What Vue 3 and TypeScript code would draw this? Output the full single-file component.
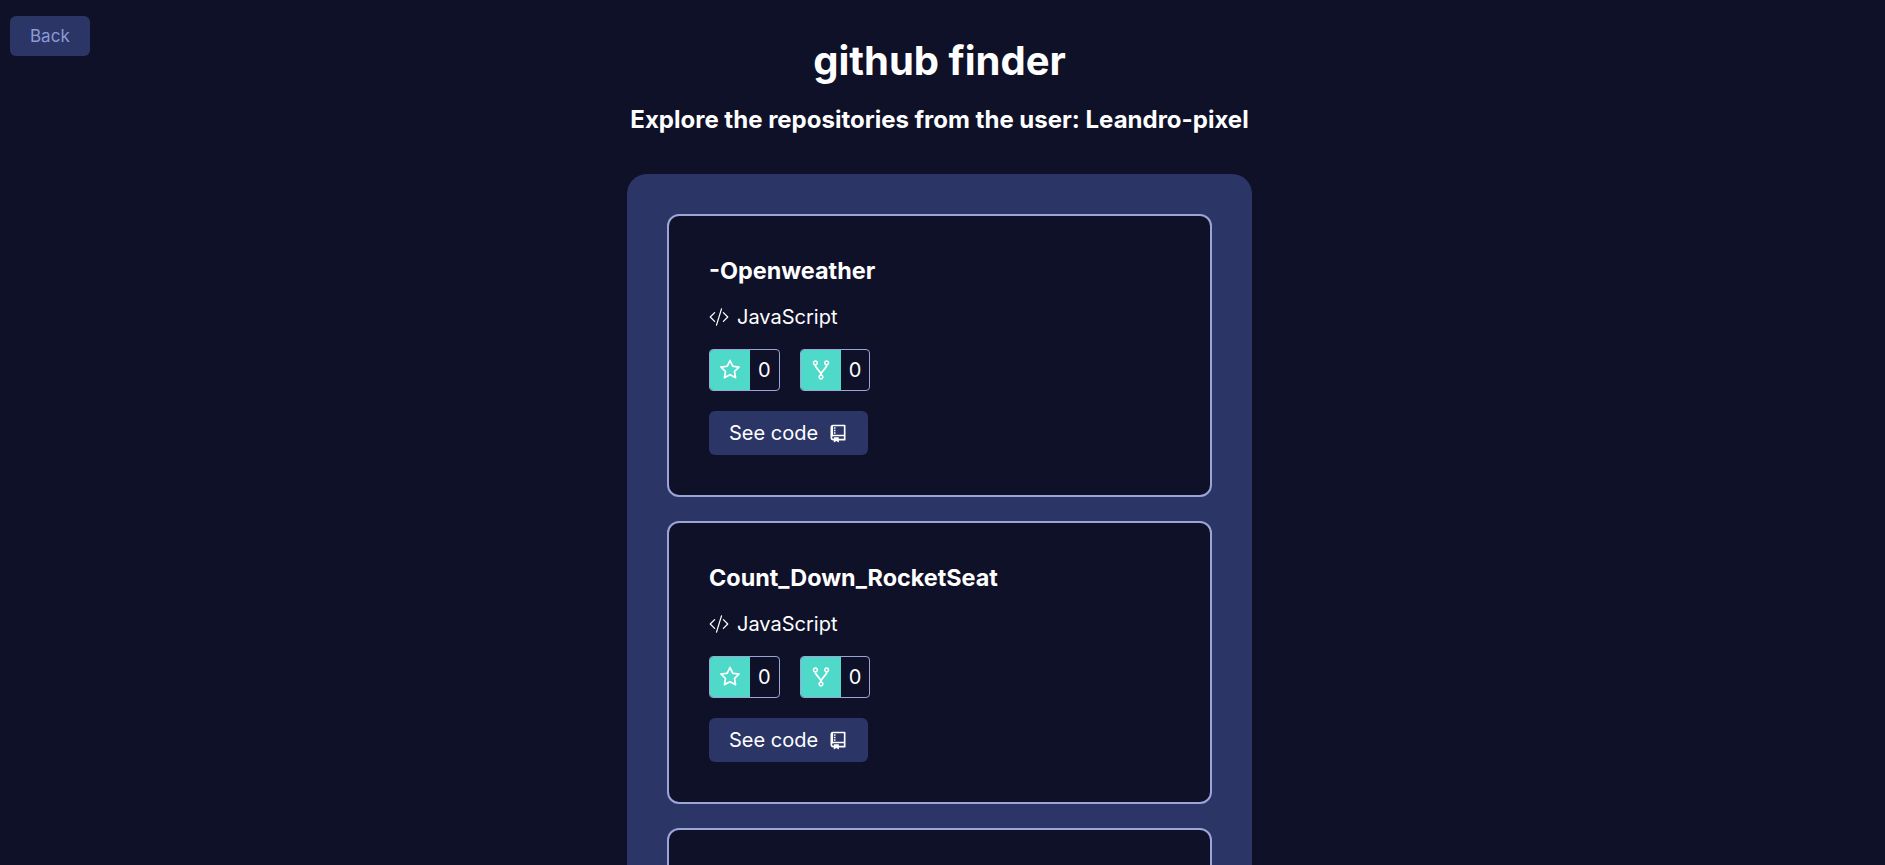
<script setup lang="ts">
interface Repo {
  name: string
  language: string
  stars: number
  forks: number
}

const user = 'Leandro-pixel'
const repos: Repo[] = [
  { name: '-Openweather', language: 'JavaScript', stars: 0, forks: 0 },
  { name: 'Count_Down_RocketSeat', language: 'JavaScript', stars: 0, forks: 0 },
]
</script>

<template>
  <div class="page">
    <button class="back" type="button">Back</button>
    <header class="header">
      <h1>github finder</h1>
      <h2>Explore the repositories from the user: {{ user }}</h2>
    </header>
    <main class="panel">
      <article v-for="repo in repos" :key="repo.name" class="card">
        <h3>{{ repo.name }}</h3>
        <p class="language">
          <svg viewBox="0 0 16 16" width="20" height="20" fill="currentColor" aria-hidden="true">
            <path d="M10.478 1.647a.5.5 0 1 0-.956-.294l-4 13a.5.5 0 0 0 .956.294l4-13zM4.854 4.146a.5.5 0 0 1 0 .708L1.707 8l3.147 3.146a.5.5 0 0 1-.708.708l-3.500-3.500a.5.5 0 0 1 0-.708l3.500-3.500a.5.5 0 0 1 .708 0zm6.292 0a.5.5 0 0 0 0 .708L14.293 8l-3.147 3.146a.5.5 0 0 0 .708.708l3.500-3.500a.5.5 0 0 0 0-.708l-3.500-3.500a.5.5 0 0 0-.708 0z" />
          </svg>
          {{ repo.language }}
        </p>
        <div class="stats">
          <div class="stat">
            <span class="stat-icon">
              <svg viewBox="0 0 1024 1024" width="24" height="24" fill="currentColor" role="img" aria-label="Stars">
                <path d="M908.100 353.100l-253.900-36.900L540.700 86.100c-3.100-6.300-8.200-11.400-14.500-14.500-15.800-7.800-35-1.300-42.900 14.500L369.800 316.200l-253.900 36.900c-7 1-13.400 4.300-18.300 9.300a32.050 32.050 0 0 0 .6 45.300l183.700 179.100-43.400 252.900a31.950 31.950 0 0 0 46.400 33.700L512 754l227.100 119.400c6.200 3.300 13.400 4.400 20.300 3.200 17.400-3 29.100-19.500 26.100-36.900l-43.400-252.900 183.700-179.100c5-4.900 8.300-11.300 9.300-18.300 2.700-17.500-9.500-33.700-27-36.300zM664.800 561.600l36.100 210.300L512 672.700 323.100 772l36.100-210.300-152.800-149L417.600 382 512 190.700 606.400 382l211.200 30.700-152.800 148.900z" />
              </svg>
            </span>
            <span class="stat-value">{{ repo.stars }}</span>
          </div>
          <div class="stat">
            <span class="stat-icon">
              <svg viewBox="0 0 1024 1024" width="24" height="24" fill="currentColor" role="img" aria-label="Forks">
                <path d="M752 100c-61.800 0-112 50.200-112 112 0 47.700 29.900 88.500 72 104.600v27.600L512 601.400 312 344.200v-27.600c42.100-16.100 72-56.900 72-104.600 0-61.800-50.200-112-112-112s-112 50.200-112 112c0 50.600 33.800 93.500 80 107.300v34.400c0 9.700 3.300 19.300 9.300 27L476 672.300v33.600c-44.200 15-76 56.900-76 106.100 0 61.800 50.200 112 112 112s112-50.200 112-112c0-49.200-31.800-91-76-106.100v-33.600l226.700-291.600c6-7.700 9.300-17.300 9.300-27v-34.400c46.200-13.800 80-56.700 80-107.300 0-61.800-50.200-112-112-112zM224 212a48.010 48.010 0 0 1 96 0 48.010 48.010 0 0 1-96 0zm336 600a48.010 48.010 0 0 1-96 0 48.010 48.010 0 0 1 96 0zm192-552a48.010 48.010 0 0 1 0-96 48.010 48.010 0 0 1 0 96z" />
              </svg>
            </span>
            <span class="stat-value">{{ repo.forks }}</span>
          </div>
        </div>
        <a class="code" href="#">
          See code
          <svg viewBox="0 0 24 24" width="20" height="20" fill="currentColor" aria-hidden="true">
            <path d="M13 21v2.500l-3-2-3 2V21h-.5A3.500 3.500 0 0 1 3 17.500V5a3 3 0 0 1 3-3h14a1 1 0 0 1 1 1v17a1 1 0 0 1-1 1h-7zm0-2h6v-3H6.500a1.500 1.500 0 0 0 0 3H7v-2h6v2zm6-5V4H6v10.035A3.530 3.530 0 0 1 6.500 14H19zM7 5h2v2H7V5zm0 3h2v2H7V8zm0 3h2v2H7v-2z" />
          </svg>
        </a>
      </article>
      <div class="card card-empty"></div>
    </main>
  </div>
</template>

<style>
html,
body {
  margin: 0;
  background: #0f1129;
}
</style>

<style scoped>
.page {
  box-sizing: border-box;
  height: 100vh;
  overflow: hidden;
  position: relative;
  padding: 37px 6px 0 0;
  background: #0f1129;
  color: #fff;
  font-family: Inter, "Liberation Sans", sans-serif;
}
.back {
  position: absolute;
  top: 16px;
  left: 10px;
  height: 40px;
  padding: 0 20px;
  border: 0;
  border-radius: 6px;
  background: #2b3566;
  color: #8b9bd4;
  font: 17px Inter, sans-serif;
  line-height: 40px;
  cursor: pointer;
}
.header {
  text-align: center;
}
h1,
h2,
h3,
p {
  margin: 0;
}
h1 {
  font-size: 40px;
  line-height: 48px;
}
h2 {
  margin-top: 20px;
  font-size: 24px;
  line-height: 30px;
}
.panel {
  box-sizing: border-box;
  width: 100%;
  max-width: 625px;
  margin: 39px auto 0;
  padding: 40px;
  border-radius: 20px;
  background: #2b3566;
  display: flex;
  flex-direction: column;
  gap: 24px;
  font-size: 20px;
}
.card {
  display: flex;
  flex-direction: column;
  align-items: flex-start;
  gap: 20px;
  padding: 40px;
  border: 2px solid #9ba5d8;
  border-radius: 12px;
  background: #0f1129;
}
.card-empty {
  min-height: 200px;
}
h3 {
  line-height: 29px;
}
.language {
  display: flex;
  align-items: center;
  gap: 8px;
  line-height: 24px;
}
.stats {
  display: flex;
  gap: 20px;
}
.stat {
  display: flex;
  height: 40px;
  border: 1px solid #9ba5d8;
  border-radius: 4px;
  overflow: hidden;
  line-height: 40px;
}
.stat-icon {
  display: flex;
  align-items: center;
  justify-content: center;
  width: 40px;
  background: #4fd9c9;
}
.stat-value {
  padding: 0 8px;
}
.code {
  display: flex;
  align-items: center;
  gap: 10px;
  padding: 10px 20px;
  border-radius: 6px;
  background: #2b3566;
  color: #fff;
  line-height: 24px;
  text-decoration: none;
}
</style>
